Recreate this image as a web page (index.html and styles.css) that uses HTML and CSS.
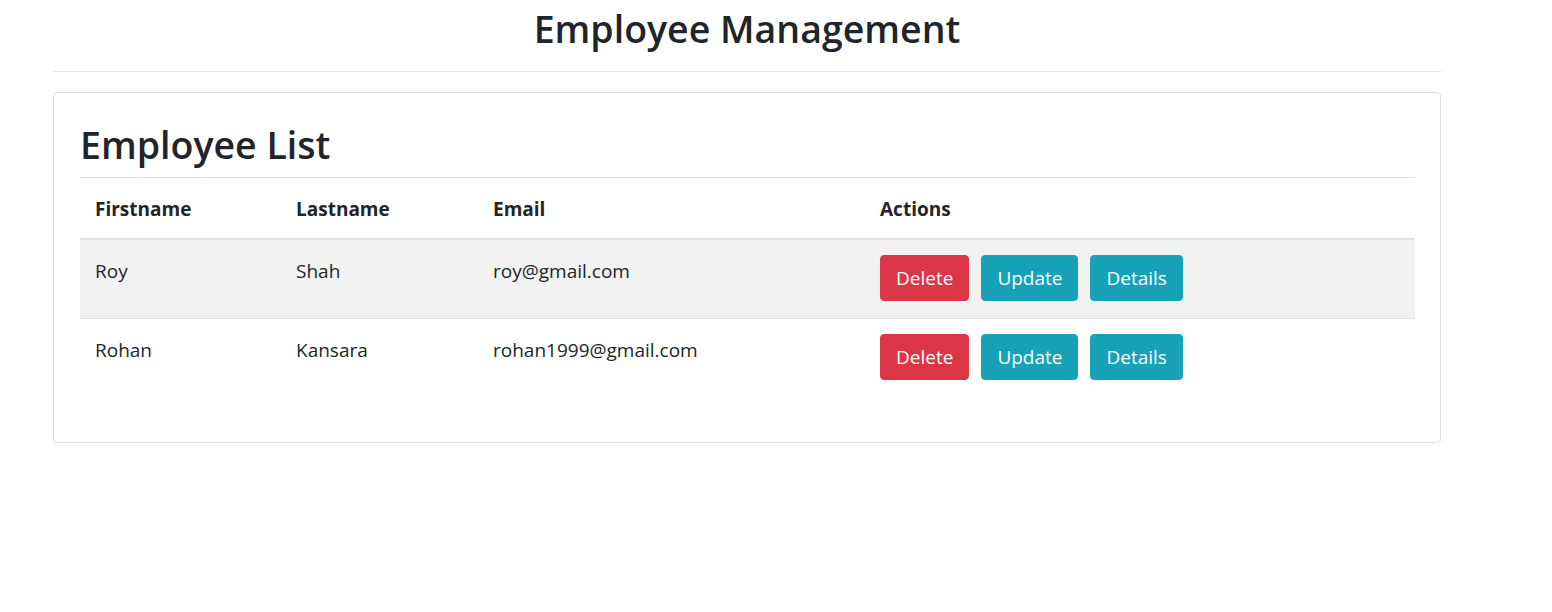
FILE: index.html
```html
<!DOCTYPE html>
<html>
<head>
<meta charset="utf-8">
<link rel="stylesheet" href="styles.css">
</head>
<body>
<div class="container">
  <h1 class="page-title">Employee Management</h1>
  <hr class="divider">
  <div class="card">
    <h2 class="card-title">Employee List</h2>
    <table class="table">
      <thead>
        <tr>
          <th class="c1">Firstname</th>
          <th class="c2">Lastname</th>
          <th class="c3">Email</th>
          <th class="c4">Actions</th>
        </tr>
      </thead>
      <tbody>
        <tr class="striped">
          <td>Roy</td>
          <td>Shah</td>
          <td>roy@gmail.com</td>
          <td class="act"><div class="actions"><button class="btn btn-danger">Delete</button><button class="btn btn-info">Update</button><button class="btn btn-info">Details</button></div></td>
        </tr>
        <tr>
          <td>Rohan</td>
          <td>Kansara</td>
          <td>rohan1999@gmail.com</td>
          <td class="act"><div class="actions"><button class="btn btn-danger">Delete</button><button class="btn btn-info">Update</button><button class="btn btn-info">Details</button></div></td>
        </tr>
      </tbody>
    </table>
  </div>
</div>
</body>
</html>
```
FILE: styles.css
```css
html, body {
  margin: 0;
  padding: 0;
  background: #fff;
}
body {
  font-family: "Open Sans", "Noto Sans", sans-serif;
  color: #212529;
  font-size: 19px;
  line-height: 1.5;
}
.container {
  width: 1388px;
  margin-left: 53px;
}
.page-title {
  margin: 0;
  padding-top: 5px;
  text-align: center;
  font-size: 37.5px;
  font-weight: 600;
  line-height: 48px;
  height: 56px;
}
.divider {
  margin: 10px 0 0 0;
  border: 0;
  border-top: 1px solid #e5e5e5;
}
.card {
  margin-top: 20px;
  border: 1px solid #dfdfdf;
  border-radius: 4px;
  padding: 25px 25px 44px 26px;
  height: 280px;
}
.card-title {
  margin: 0;
  padding-top: 3px;
  font-size: 37.5px;
  font-weight: 600;
  line-height: 48px;
  height: 56px;
}
.table {
  width: 100%;
  border-collapse: collapse;
}
.table th, .table td {
  text-align: left;
  vertical-align: top;
  padding: 17px 15px 13px;
  border-top: 1px solid #dee2e6;
}
.table th {
  font-weight: 700;
  height: 30px;
  border-bottom: 2px solid #dee2e6;
}
.table td {
  height: 48px;
}
.table td.act {
  padding: 15px;
}
.c1 { width: 171px; }
.c2 { width: 167px; }
.c3 { width: 357px; }
.striped td {
  background: #f2f2f2;
  border-top: 0;
}
.actions {
  display: flex;
  gap: 12px;
}
.btn {
  font-family: inherit;
  font-size: 19px;
  line-height: 30px;
  padding: 7px 15px;
  border: 1px solid transparent;
  border-radius: 4px;
  color: #fff;
  height: 46px;
}
.btn-danger {
  background: #dc3545;
  border-color: #dc3545;
}
.btn-info {
  background: #17a2b8;
  border-color: #17a2b8;
}
```
